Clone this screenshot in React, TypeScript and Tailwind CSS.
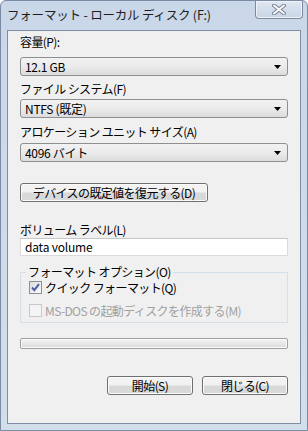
const font = "font-['Noto_Sans_CJK_JP','Noto_Sans',sans-serif]";

function Select({ value, className }: { value: string; className?: string }) {
  return (
    <div
      className={`flex h-[19px] items-center justify-between rounded-[3px] border border-[#8e8f8f] bg-gradient-to-b from-[#f2f2f2] via-[#ebebeb] to-[#dcdcdc] pl-[4px] pr-[6px] ${className ?? ""}`}
    >
      <span className="text-[12px] leading-none tracking-[-0.3px] text-black">{value}</span>
      <svg width="7" height="4" viewBox="0 0 7 4">
        <path d="M0 0h7L3.5 4z" fill="#000" />
      </svg>
    </div>
  );
}

function Button({ label, className }: { label: string; className?: string }) {
  return (
    <div
      className={`flex h-[19px] items-center justify-center rounded-[3px] border border-[#707070] bg-gradient-to-b from-[#f2f2f2] from-45% to-[#d9d9d9] to-55% text-[12px] leading-none text-black shadow-[inset_0_0_0_1px_#fbfbfb] ${className ?? ""}`}
    >
      {label}
    </div>
  );
}

function Checkbox({ checked, disabled }: { checked?: boolean; disabled?: boolean }) {
  return (
    <div
      className={`flex h-[13px] w-[13px] shrink-0 items-center justify-center border ${
        disabled ? "border-[#c8c8c8] bg-[#f4f4f4]" : "border-[#8f8f8f] bg-gradient-to-br from-[#dcdcdc] to-[#fbfbfb]"
      }`}
    >
      {checked && (
        <svg width="9" height="9" viewBox="0 0 9 9">
          <path d="M1 4.5l2.3 2.6L8 1.2" fill="none" stroke="#4a5fa7" strokeWidth="2" />
        </svg>
      )}
    </div>
  );
}

export default function App() {
  return (
    <div
      className={`${font} flex h-[431px] w-[308px] flex-col overflow-hidden rounded-t-[6px] border border-[#7a8ba3] bg-gradient-to-b from-[#c9d7e9] to-[#d3deeb]`}
    >
      {/* title bar */}
      <div className="flex h-[29px] shrink-0 items-start justify-between">
        <span className="mt-[6px] pl-[6px] text-[12.5px] leading-[16px] tracking-[-0.2px] text-[#1e1e1e]">
          フォーマット - ローカル ディスク (F:)
        </span>
        <div className="mr-[4px] flex h-[18px] w-[48px] items-center justify-center rounded-b-[4px] border border-t-0 border-[#7d8ba0] bg-gradient-to-b from-[#dfe7f2] to-[#c9d5e5] shadow-[inset_0_0_0_1px_#eef3f9]">
          <svg width="14" height="11" viewBox="0 0 14 11">
            <path d="M2 1.5l10 8M12 1.5l-10 8" stroke="#7c8797" strokeWidth="4" strokeLinecap="round" />
            <path d="M2 1.5l10 8M12 1.5l-10 8" stroke="#f7f9fc" strokeWidth="2" strokeLinecap="round" />
          </svg>
        </div>
      </div>

      {/* client area */}
      <div className="mx-[6px] h-[394px] shrink-0 border border-[#7f8ea3] bg-[#f0f0f0] px-[12px] text-[12px] tracking-[-0.6px] text-black">
        <div className="mt-[3px] leading-[16px]">容量(P):</div>
        <Select value="12.1 GB" className="mt-[7px]" />
        <div className="mt-[5px] leading-[16px]">ファイル システム(F)</div>
        <Select value="NTFS (既定)" className="mt-[2px]" />
        <div className="mt-[6px] leading-[16px]">アロケーション ユニット サイズ(A)</div>
        <Select value="4096 バイト" className="mt-[3px]" />

        <Button label="デバイスの既定値を復元する(D)" className="mt-[21px] w-[188px]" />

        <div className="mt-[20px] leading-[16px]">ボリューム ラベル(L)</div>
        <div className="flex h-[18px] items-center border border-[#dadada] border-t-[#c6c6c6] bg-white pl-[4px] leading-none tracking-[-0.2px]">
          data volume
        </div>

        {/* group box */}
        <div className="relative mt-[16px] h-[51px] border border-[#d5dfe5] pl-[8px]">
          <span className="absolute -top-[8px] left-[5px] bg-[#f0f0f0] px-[2px] leading-[14px]">
            フォーマット オプション(O)
          </span>
          <div className="mt-[7px] flex items-center gap-[3px] leading-[15px]">
            <Checkbox checked />
            <span>クイック フォーマット(Q)</span>
          </div>
          <div className="mt-[8px] flex items-center gap-[3px] leading-[15px] text-[#a0a0a0]">
            <Checkbox disabled />
            <span>MS-DOS の起動ディスクを作成する(M)</span>
          </div>
        </div>

        {/* progress */}
        <div className="mt-[15px] h-[11px] rounded-[2px] border border-[#a0a0a0] bg-gradient-to-b from-[#f3f3f3] to-[#dcdcdc] shadow-[inset_0_0_0_1px_#fafafa]" />

        <div className="mt-[27px] flex justify-end gap-[9px]">
          <Button label="開始(S)" className="w-[86px]" />
          <Button label="閉じる(C)" className="w-[86px]" />
        </div>
      </div>
    </div>
  );
}
